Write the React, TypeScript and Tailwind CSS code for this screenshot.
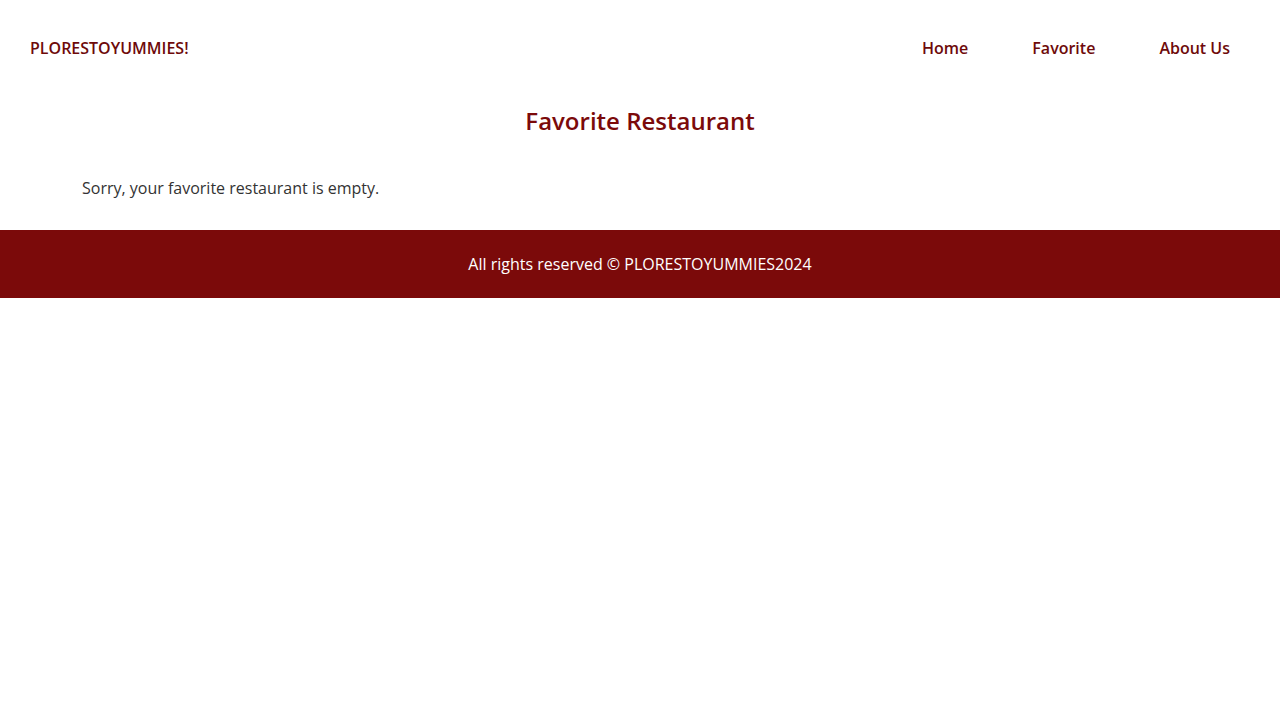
export default function App() {
  return (
    <div className="min-h-screen bg-white font-['Open_Sans','Noto_Sans',sans-serif]">
      {/* Header */}
      <header className="flex h-24 items-center justify-between pl-[30px] pr-[50px]">
        <a href="#" className="text-base font-semibold text-[#6e0a0a]">
          PLORESTOYUMMIES!
        </a>
        <nav>
          <ul className="flex items-center gap-[64px]">
            <li>
              <a href="#" className="text-base font-semibold text-[#6e0a0a]">Home</a>
            </li>
            <li>
              <a href="#" className="text-base font-semibold text-[#6e0a0a]">Favorite</a>
            </li>
            <li>
              <a href="#" className="text-base font-semibold text-[#6e0a0a]">About Us</a>
            </li>
          </ul>
        </nav>
      </header>

      {/* Main */}
      <main className="px-[82px] pb-[30px]">
        <h2 className="pt-[9px] text-center text-2xl font-semibold text-[#7b0a0a]">
          Favorite Restaurant
        </h2>
        <p className="mt-[39px] text-base text-[#333]">
          Sorry, your favorite restaurant is empty.
        </p>
      </main>

      {/* Footer */}
      <footer className="flex h-[68px] items-center justify-center bg-[#7b0a0a]">
        <p className="text-base text-white">All rights reserved © PLORESTOYUMMIES2024</p>
      </footer>
    </div>
  )
}
